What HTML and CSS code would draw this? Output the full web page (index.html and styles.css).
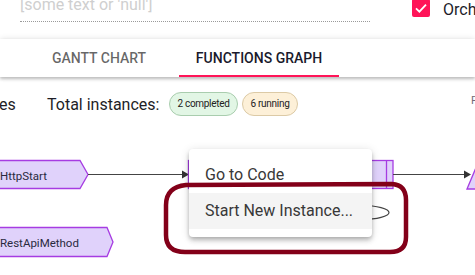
FILE: index.html
```html
<!DOCTYPE html>
<html lang="en">
<head>
    <meta charset="UTF-8">
    <meta name="viewport" content="width=device-width, initial-scale=1.0">
    <title>Functions Graph</title>
    <link rel="stylesheet" href="styles.css">
</head>
<body>
    <div class="page">
        <!-- Filter row -->
        <div class="filter-row">
            <div class="filter-input">[some text or 'null']</div>
            <label class="check">
                <span class="check-box">
                    <svg width="18" height="18" viewBox="0 0 18 18">
                        <path d="M4 9.3 L7.4 12.6 L14 5.6" fill="none" stroke="#fff" stroke-width="1.8"/>
                    </svg>
                </span>
                <span class="check-text">Orchestrations only</span>
            </label>
        </div>

        <!-- Tabs -->
        <nav class="tabs">
            <div class="tab">Gantt Chart</div>
            <div class="tab active">Functions Graph</div>
        </nav>

        <!-- Stats -->
        <div class="stats">
            <span class="stats-cut">es</span>
            <span class="stats-label">Total instances:</span>
            <span class="badge completed">2 completed</span>
            <span class="badge running">6 running</span>
            <span class="stats-right">P</span>
        </div>

        <!-- Graph -->
        <div class="graph">
            <svg class="graph-canvas" width="475" height="159" viewBox="0 116 475 159">
                <polygon class="node" points="-5,160.5 80,160.5 88,174.5 80,188.5 -5,188.5"/>
                <text class="node-label" x="0" y="179.5">HttpStart</text>

                <line class="edge" x1="88" y1="174.5" x2="183" y2="174.5"/>
                <polygon class="arrow" points="182,170.5 189,174.5 182,178.5"/>

                <rect class="node" x="188.5" y="160.5" width="204.5" height="28"/>
                <line class="node-line" x1="386.5" y1="160.5" x2="386.5" y2="188.5"/>

                <line class="edge" x1="393" y1="174.5" x2="465" y2="174.5"/>
                <polygon class="arrow" points="464,170.5 471,174.5 464,178.5"/>

                <polygon class="node" points="467,189 479,160.5 520,160.5 520,189"/>

                <ellipse class="edge" cx="362" cy="212.5" rx="27" ry="7" fill="none"/>

                <polygon class="node" points="-5,227.5 107,227.5 113,242 107,256.5 -5,256.5"/>
                <text class="node-label" x="0" y="246.5">RestApiMethod</text>
            </svg>

            <div class="menu">
                <div class="menu-item">Go to Code</div>
                <div class="menu-item hover">Start New Instance...</div>
            </div>

            <svg class="annotation" width="475" height="159" viewBox="0 116 475 159">
                <path d="M186 185 L392 184 Q406 185 406 200 L406 237 Q406 252 390 252 L185 252 Q166 252 166 235 L166 205 Q166 187 186 185 Z"/>
            </svg>
        </div>
    </div>
</body>
</html>
```

FILE: styles.css
```css
/* Page */
body {
    margin: 0;
    font-family: Roboto, "Liberation Sans", sans-serif;
    background-color: #fff;
    color: #222;
}

.page {
    width: 475px;
    height: 275px;
    overflow: hidden;
    white-space: nowrap;
}

/* Filter row */
.filter-row {
    display: flex;
    align-items: flex-start;
    height: 44px;
    margin-top: -5px;
    overflow: hidden;
}

.filter-input {
    flex-shrink: 0;
    margin-left: 20px;
    width: 350px;
    height: 26px;
    border-bottom: 1px dotted #9a9a9a;
    font-size: 16px;
    line-height: 20px;
    color: #cfcfcf;
}

.check {
    display: flex;
    flex-shrink: 0;
    align-items: flex-start;
    margin-left: 42px;
}

.check-box {
    display: block;
    width: 18px;
    height: 18px;
    margin-top: 4px;
    border-radius: 2px;
    background-color: #ff1458;
}

.check-box svg {
    display: block;
}

.check-text {
    margin-left: 13px;
    margin-top: 6px;
    font-size: 16px;
    line-height: 18px;
    color: #1c1c2a;
}

/* Tabs */
.tabs {
    display: flex;
    height: 38px;
    padding-left: 19px;
    background-color: #fff;
    box-shadow: 0 0 6px rgba(0, 0, 0, 0.12), 0 2px 3px rgba(0, 0, 0, 0.22);
    position: relative;
}

.tab {
    width: 160px;
    height: 38px;
    box-sizing: border-box;
    padding-top: 2px;
    line-height: 34px;
    border-bottom: 2px solid transparent;
    text-align: center;
    font-size: 14px;
    font-weight: 500;
    text-transform: uppercase;
    color: rgba(0, 0, 0, 0.6);
}

.tab.active {
    color: #1a1a2c;
    border-bottom-color: #ff1458;
}

/* Stats */
.stats {
    display: flex;
    align-items: center;
    height: 24px;
    margin-top: 15px;
    font-size: 16px;
    color: #1e1e26;
}

.stats-cut {
    width: 48px;
    margin-left: -1px;
}

.badge {
    height: 24px;
    box-sizing: border-box;
    padding: 0 7px;
    border: 1px solid;
    border-radius: 12px;
    font-size: 10px;
    line-height: 22px;
    letter-spacing: -0.3px;
    color: #222;
}

.badge.completed {
    margin-left: 10px;
    background-color: #e2f6e5;
    border-color: #a9cdae;
}

.badge.running {
    margin-left: 4px;
    padding: 0 8px;
    background-color: #fdf0d8;
    border-color: #dccaa6;
}

.stats-right {
    align-self: flex-start;
    margin-left: auto;
    margin-right: -3px;
    margin-top: 2px;
    font-size: 11px;
    line-height: 13px;
    color: #6e6a7a;
}

/* Graph */
.graph {
    position: relative;
    height: 159px;
}

.graph-canvas {
    display: block;
}

.node {
    fill: #e0d2fb;
    stroke: #a63ce2;
    stroke-width: 1.3;
}

.node-line {
    stroke: #a63ce2;
    stroke-width: 1.3;
}

.node-label {
    font-family: Roboto, "Liberation Sans", sans-serif;
    font-size: 11.5px;
    fill: #2a2a3e;
}

.edge {
    stroke: #444;
    stroke-width: 1.2;
}

.arrow {
    fill: #333;
}

/* Context menu */
.menu {
    position: absolute;
    left: 189px;
    top: 33px;
    width: 183px;
    padding: 8px 0;
    background-color: #fff;
    border-radius: 4px;
    box-shadow: 0 2px 4px -1px rgba(0, 0, 0, 0.2), 0 4px 5px rgba(0, 0, 0, 0.14), 0 1px 10px rgba(0, 0, 0, 0.12);
}

.menu-item {
    height: 36px;
    padding-left: 16px;
    font-size: 16px;
    line-height: 36px;
    color: #383838;
}

.menu-item.hover {
    background-color: #f4f4f4;
}

/* Red annotation drawn over the screenshot */
.annotation {
    position: absolute;
    left: 0;
    top: 0;
    pointer-events: none;
}

.annotation path {
    fill: none;
    stroke: #830019;
    stroke-width: 4.5;
}
```
